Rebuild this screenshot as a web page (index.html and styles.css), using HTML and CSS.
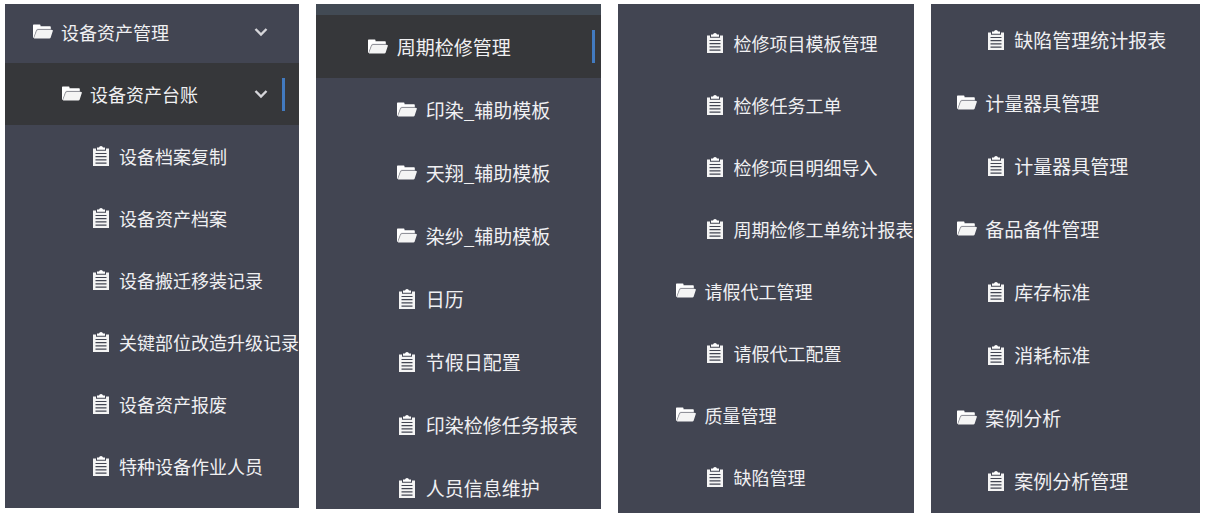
FILE: index.html
```html
<!DOCTYPE html>
<html lang="zh-CN">
<head>
    <meta charset="UTF-8">
    <meta name="viewport" content="width=device-width, initial-scale=1.0">
    <title>设备资产管理</title>
    <link rel="stylesheet" href="styles.css">
</head>
<body>
    <svg class="sprite" aria-hidden="true">
        <symbol id="folder" viewBox="0 0 20 16">
            <path d="M0 1.2Q0 .5.7.5H6.8Q7.5.5 7.5 1.2V2.3H17Q17.8 2.3 17.8 3.1V6H4L1 14Q0 14 0 13Z" fill="#fff"/>
            <path d="M1 13.6L3.6 6.2Q3.8 5.4 4.6 5.4H18.5" fill="none" stroke="#85868e" stroke-width="1"/>
            <path d="M4.8 6H19.2Q20.2 6 19.8 7L17.6 13.8Q17.3 14.6 16.4 14.6H1.6Q.8 14.6 1.1 13.8L3.8 6.8Q4.1 6 4.8 6Z" fill="#f4f4f4"/>
        </symbol>
        <symbol id="clipboard" viewBox="0 0 20 20">
            <path d="M2 2.5H5V4.8H15V2.5H18V20H2Z" fill="#f4f4f4"/>
            <path d="M6 3.8V1.6H8Q8.3 0 10 0T12 1.6H14V3.8Z" fill="#fff"/>
            <path d="M4.5 7.5H15.5M4.5 10.7H15.5M4.5 13.9H15.5M4.5 17.1H15.5" stroke="#424552" stroke-width="1.2"/>
        </symbol>
        <symbol id="chevron" viewBox="0 0 14 10">
            <path d="M1.5 2L7 7.5L12.5 2" fill="none" stroke="#d6d6da" stroke-width="2.4"/>
        </symbol>
    </svg>

    <div class="menus">
        <nav class="menu menu-assets">
            <ul>
                <li><a href="#" class="level1"><svg class="icon folder"><use href="#folder"/></svg><span>设备资产管理</span><svg class="arrow"><use href="#chevron"/></svg></a></li>
                <li><a href="#" class="level2 active"><svg class="icon folder"><use href="#folder"/></svg><span>设备资产台账</span><svg class="arrow"><use href="#chevron"/></svg></a></li>
                <li><a href="#" class="level3"><svg class="icon"><use href="#clipboard"/></svg><span>设备档案复制</span></a></li>
                <li><a href="#" class="level3"><svg class="icon"><use href="#clipboard"/></svg><span>设备资产档案</span></a></li>
                <li><a href="#" class="level3"><svg class="icon"><use href="#clipboard"/></svg><span>设备搬迁移装记录</span></a></li>
                <li><a href="#" class="level3"><svg class="icon"><use href="#clipboard"/></svg><span>关键部位改造升级记录</span></a></li>
                <li><a href="#" class="level3"><svg class="icon"><use href="#clipboard"/></svg><span>设备资产报废</span></a></li>
                <li><a href="#" class="level3"><svg class="icon"><use href="#clipboard"/></svg><span>特种设备作业人员</span></a></li>
            </ul>
        </nav>

        <nav class="menu menu-repair">
            <ul>
                <li><a href="#" class="level2 active"><svg class="icon folder"><use href="#folder"/></svg><span>周期检修管理</span></a></li>
                <li><a href="#" class="level3"><svg class="icon folder"><use href="#folder"/></svg><span>印染_辅助模板</span></a></li>
                <li><a href="#" class="level3"><svg class="icon folder"><use href="#folder"/></svg><span>天翔_辅助模板</span></a></li>
                <li><a href="#" class="level3"><svg class="icon folder"><use href="#folder"/></svg><span>染纱_辅助模板</span></a></li>
                <li><a href="#" class="level3"><svg class="icon"><use href="#clipboard"/></svg><span>日历</span></a></li>
                <li><a href="#" class="level3"><svg class="icon"><use href="#clipboard"/></svg><span>节假日配置</span></a></li>
                <li><a href="#" class="level3"><svg class="icon"><use href="#clipboard"/></svg><span>印染检修任务报表</span></a></li>
                <li><a href="#" class="level3"><svg class="icon"><use href="#clipboard"/></svg><span>人员信息维护</span></a></li>
            </ul>
        </nav>

        <nav class="menu menu-tasks">
            <ul>
                <li><a href="#" class="level3"><svg class="icon"><use href="#clipboard"/></svg><span>检修项目模板管理</span></a></li>
                <li><a href="#" class="level3"><svg class="icon"><use href="#clipboard"/></svg><span>检修任务工单</span></a></li>
                <li><a href="#" class="level3"><svg class="icon"><use href="#clipboard"/></svg><span>检修项目明细导入</span></a></li>
                <li><a href="#" class="level3"><svg class="icon"><use href="#clipboard"/></svg><span>周期检修工单统计报表</span></a></li>
                <li><a href="#" class="level2"><svg class="icon folder"><use href="#folder"/></svg><span>请假代工管理</span></a></li>
                <li><a href="#" class="level3"><svg class="icon"><use href="#clipboard"/></svg><span>请假代工配置</span></a></li>
                <li><a href="#" class="level2"><svg class="icon folder"><use href="#folder"/></svg><span>质量管理</span></a></li>
                <li><a href="#" class="level3"><svg class="icon"><use href="#clipboard"/></svg><span>缺陷管理</span></a></li>
            </ul>
        </nav>

        <nav class="menu menu-parts">
            <ul>
                <li><a href="#" class="level3"><svg class="icon"><use href="#clipboard"/></svg><span>缺陷管理统计报表</span></a></li>
                <li><a href="#" class="level2"><svg class="icon folder"><use href="#folder"/></svg><span>计量器具管理</span></a></li>
                <li><a href="#" class="level3"><svg class="icon"><use href="#clipboard"/></svg><span>计量器具管理</span></a></li>
                <li><a href="#" class="level2"><svg class="icon folder"><use href="#folder"/></svg><span>备品备件管理</span></a></li>
                <li><a href="#" class="level3"><svg class="icon"><use href="#clipboard"/></svg><span>库存标准</span></a></li>
                <li><a href="#" class="level3"><svg class="icon"><use href="#clipboard"/></svg><span>消耗标准</span></a></li>
                <li><a href="#" class="level2"><svg class="icon folder"><use href="#folder"/></svg><span>案例分析</span></a></li>
                <li><a href="#" class="level3"><svg class="icon"><use href="#clipboard"/></svg><span>案例分析管理</span></a></li>
            </ul>
        </nav>
    </div>
</body>
</html>
```

FILE: styles.css
```css
* {
    box-sizing: border-box;
}
body {
    margin: 0;
    background: #fff;
    font-family: "Noto Sans CJK SC", sans-serif;
    font-size: 18px;
}
.sprite {
    display: none;
}
.menus {
    display: grid;
    grid-template-columns: 294fr 286fr 296fr 269fr;
    align-items: start;
    gap: 17px;
    padding: 4px 5px;
}
.menu {
    --start: 28px;
    --end: 14px;
    --row: 62px;
    min-width: 0;
    overflow: hidden;
    background: #424552;
}
.menu ul {
    list-style: none;
    margin: 0;
    padding: 0;
}
.menu a {
    display: flex;
    align-items: center;
    height: var(--row);
    padding-right: var(--end);
    color: #f0f0f2;
    text-decoration: none;
    white-space: nowrap;
}
.menu a:hover {
    background: #36373a;
}
.menu span {
    flex: none;
    margin-left: 8px;
    line-height: 28px;
}
.menu .level1 {
    padding-left: var(--start);
}
.menu .level2 {
    padding-left: calc(var(--start) + 29px);
}
.menu .level3 {
    padding-left: calc(var(--start) + 58px);
}
/* marker at the right edge, coloured on the open item only */
.menu a::after {
    content: "";
    width: 3px;
    height: 33px;
    margin-left: auto;
}
.menu .active {
    background: #36373a;
}
.menu .active::after {
    background: #427abf;
}
.icon {
    flex: none;
    width: 20px;
    height: 20px;
}
.folder {
    height: 16px;
}
.arrow {
    width: 14px;
    height: 10px;
    margin-left: auto;
}
.menu a:has(.arrow)::after {
    margin-left: 14px;
}

.menu-assets {
    padding-bottom: 11px;
}
.menu-assets ul {
    margin-top: -3px;
}
.menu-repair,
.menu-parts {
    --row: 63px;
    font-size: 19px;
}
.menu-repair {
    --start: 23px;
    --end: 6px;
    padding-top: 11px;
    background: linear-gradient(#424a54 11px, #424552 11px);
}
.menu-repair ul {
    margin-bottom: -10px;
}
.menu-repair span {
    margin-left: 9px;
}
.menu-tasks {
    --start: 29px;
    padding: 8px 0 5px;
}
.menu-parts {
    --start: -3px;
    padding: 4px 0 1px;
}
```
